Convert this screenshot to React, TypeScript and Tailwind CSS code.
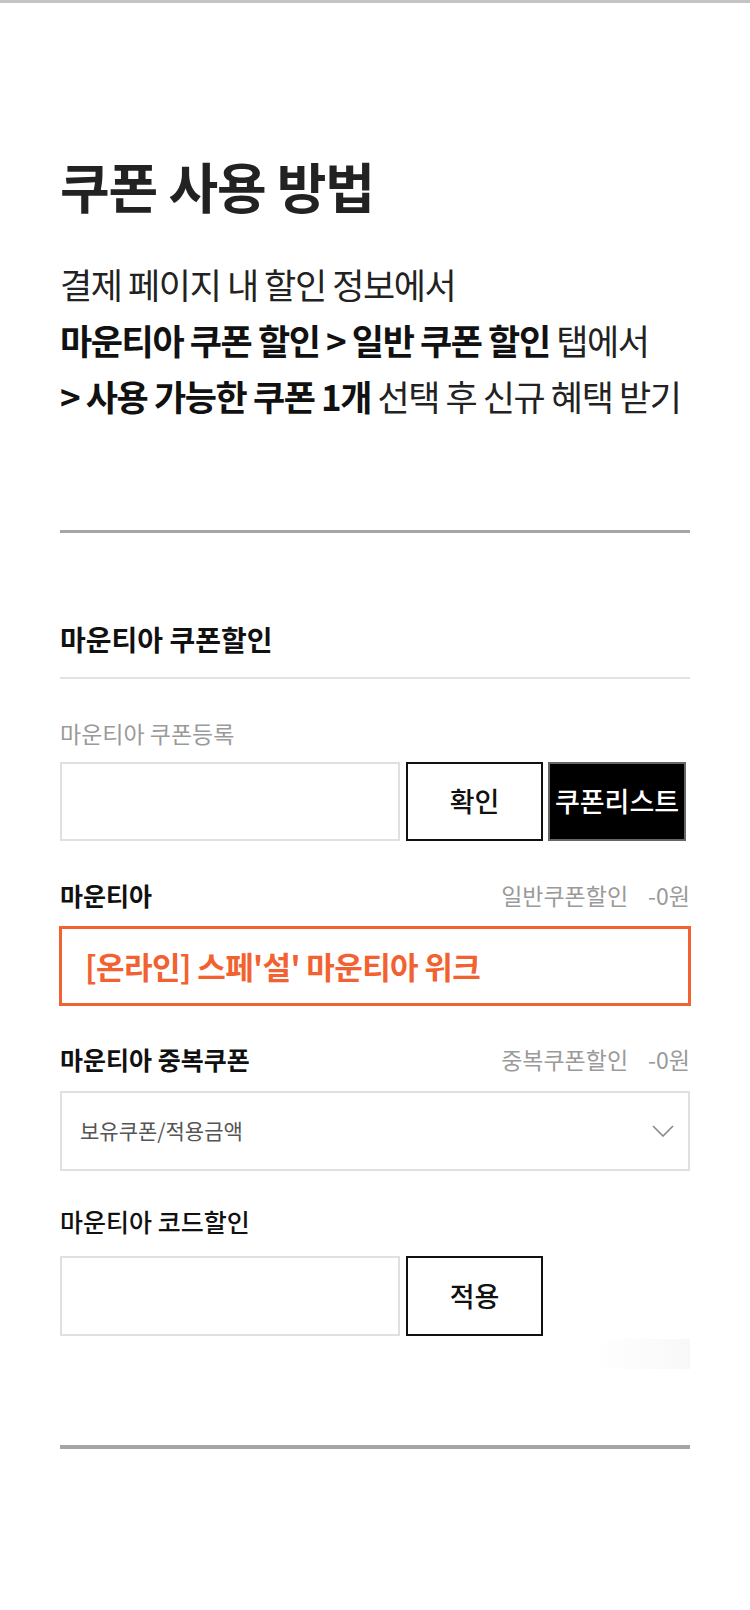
import React from "react";

const SubRow = ({ title, label, bold = true }: { title: string; label?: string; bold?: boolean }) => (
  <div className="flex items-center justify-between">
    <h3 className={`text-[25px] leading-[30px] text-[#111] ${bold ? "font-bold" : "font-medium"}`}>{title}</h3>
    {label && (
      <div className="flex gap-[20px] text-[23px] leading-[30px] text-[#9a9a9a]">
        <span>{label}</span>
        <span>-0원</span>
      </div>
    )}
  </div>
);

const OutlineButton = ({ children }: { children: React.ReactNode }) => (
  <button className="w-[137px] h-full border-2 border-[#111] bg-white text-[27px] font-medium text-[#111]">
    {children}
  </button>
);

export default function App() {
  return (
    <div className="min-h-[1610px] bg-white border-t-[3px] border-[#c4c4c4] font-['Noto_Sans_CJK_KR','Noto_Sans',sans-serif] text-[#222]">
      <div className="px-[60px] pt-[155px]">
        <h1 className="text-[54px] leading-[56px] font-bold tracking-[-0.02em] text-[#222]">쿠폰 사용 방법</h1>
        <div className="mt-[42px] text-[35px] leading-[56px] tracking-[-0.04em] text-[#222]">
          <p>결제 페이지 내 할인 정보에서</p>
          <p>
            <b className="font-bold text-[#111]">마운티아 쿠폰 할인 &gt; 일반 쿠폰 할인</b> 탭에서
          </p>
          <p>
            <b className="font-bold text-[#111]">&gt; 사용 가능한 쿠폰 1개</b> 선택 후 신규 혜택 받기
          </p>
        </div>

        <div className="mt-[106px] h-[3px] bg-[#a5a5a5]" />

        <h2 className="mt-[90px] text-[28px] leading-[32px] font-bold text-[#111]">마운티아 쿠폰할인</h2>
        <div className="mt-[22px] h-[2px] bg-[#e3e3e3]" />

        <p className="mt-[40px] text-[23px] leading-[28px] text-[#9a9a9a]">마운티아 쿠폰등록</p>
        <div className="mt-[15px] flex h-[79px]">
          <input className="w-[340px] h-full border-2 border-[#e0e0e0] outline-none" />
          <div className="ml-[6px] h-full">
            <OutlineButton>확인</OutlineButton>
          </div>
          <button className="ml-[5px] w-[138px] h-full border-2 border-[#666] bg-black text-[27px] font-medium text-white">
            쿠폰리스트
          </button>
        </div>

        <div className="mt-[39px]">
          <SubRow title="마운티아" label="일반쿠폰할인" />
        </div>
        <div className="mt-[16px] -ml-px -mr-px flex h-[80px] items-center border-[3px] border-[#f26230] pl-[23px]">
          <span className="text-[31px] font-bold tracking-[-0.02em] text-[#f26230]">[온라인] 스페'설' 마운티아 위크</span>
        </div>

        <div className="mt-[38px]">
          <SubRow title="마운티아 중복쿠폰" label="중복쿠폰할인" />
        </div>
        <div className="mt-[17px] flex h-[80px] items-center justify-between border-2 border-[#e0e0e0] pl-[18px] pr-[14px]">
          <span className="text-[21px] text-[#555]">보유쿠폰/적용금액</span>
          <svg width="22" height="12" viewBox="0 0 22 12" fill="none">
            <path d="M1 1l10 10L21 1" stroke="#888" strokeWidth="1.6" />
          </svg>
        </div>

        <div className="mt-[35px]">
          <SubRow title="마운티아 코드할인" bold={false} />
        </div>
        <div className="mt-[20px] flex h-[80px]">
          <input className="w-[340px] h-full border-2 border-[#e0e0e0] outline-none" />
          <div className="ml-[6px] h-full">
            <OutlineButton>적용</OutlineButton>
          </div>
        </div>
        <div className="flex justify-end">
          <div className="mt-[3px] h-[30px] w-[98px] rounded-tl-[60px] bg-gradient-to-r from-white to-[#f8f8f8]" />
        </div>

        <div className="mt-[76px] h-[4px] bg-[#a5a5a5]" />
      </div>
    </div>
  );
}
